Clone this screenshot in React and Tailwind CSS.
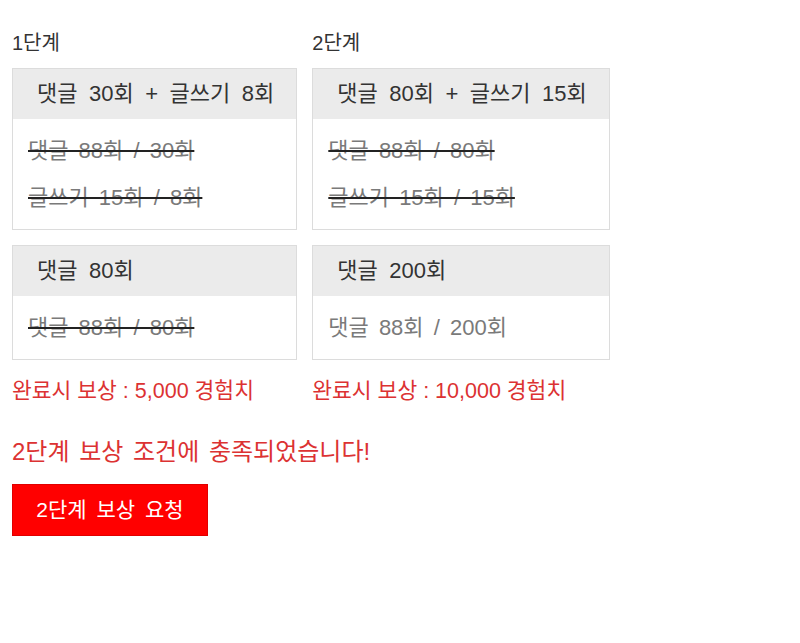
const FONT = { fontFamily: '"Liberation Sans", "Noto Sans CJK KR", sans-serif' };

const stages = [
  {
    label: '1단계',
    reward: '완료시 보상 : 5,000 경험치',
    cards: [
      { title: '댓글 30회 + 글쓰기 8회', rows: [{ text: '댓글 88회 / 30회', done: true }, { text: '글쓰기 15회 / 8회', done: true }] },
      { title: '댓글 80회', rows: [{ text: '댓글 88회 / 80회', done: true }] },
    ],
  },
  {
    label: '2단계',
    reward: '완료시 보상 : 10,000 경험치',
    cards: [
      { title: '댓글 80회 + 글쓰기 15회', rows: [{ text: '댓글 88회 / 80회', done: true }, { text: '글쓰기 15회 / 15회', done: true }] },
      { title: '댓글 200회', rows: [{ text: '댓글 88회 / 200회', done: false }] },
    ],
  },
];

function MissionCard({ card }) {
  return (
    <div className="border border-[#dcdcdc] bg-white">
      <div className="bg-[#ebebeb] h-[50px] flex items-center pl-[24px] pr-[22px] text-[22px] leading-[30px] text-[#333] whitespace-nowrap [word-spacing:5.4px]">
        {card.title}
      </div>
      <div className="flex flex-col gap-[17px] px-[15px] pt-[17px] pb-[16px]">
        {card.rows.map((r, i) => (
          <div
            key={i}
            className={
              'text-[22px] leading-[30px] text-[#7a7a7a] whitespace-nowrap [word-spacing:4px] ' +
              (r.done ? 'line-through decoration-[#222] decoration-2' : '')
            }
          >
            {r.text}
          </div>
        ))}
      </div>
    </div>
  );
}

export default function App() {
  return (
    <div className="min-h-screen bg-white px-[12px] pt-[28px]" style={FONT}>
      <div className="grid grid-cols-[auto_auto] justify-start gap-x-[15px]">
        {stages.map((s, i) => (
          <div key={i} className="text-[20px] leading-[30px] text-[#333] mb-[10px]" style={{ gridColumn: i + 1, gridRow: 1 }}>
            {s.label}
          </div>
        ))}
        {stages.map((s, i) => (
          <div key={'a' + i} style={{ gridColumn: i + 1, gridRow: 2 }}>
            <MissionCard card={s.cards[0]} />
          </div>
        ))}
        {stages.map((s, i) => (
          <div key={'b' + i} className="mt-[15px]" style={{ gridColumn: i + 1, gridRow: 3 }}>
            <MissionCard card={s.cards[1]} />
          </div>
        ))}
        {stages.map((s, i) => (
          <div key={'c' + i} className="mt-[16px] text-[21.5px] leading-[30px] text-[#dc3232] whitespace-nowrap" style={{ gridColumn: i + 1, gridRow: 4 }}>
            {s.reward}
          </div>
        ))}
      </div>
      <div className="mt-[31px] text-[24px] leading-[30px] text-[#dc3232] [word-spacing:3px]">2단계 보상 조건에 충족되었습니다!</div>
      <button className="mt-[17px] w-[196px] h-[52px] bg-[#ff0000] border border-[#e00000] text-white text-[21px] flex items-center justify-center [word-spacing:4px]">
        2단계 보상 요청
      </button>
    </div>
  );
}
